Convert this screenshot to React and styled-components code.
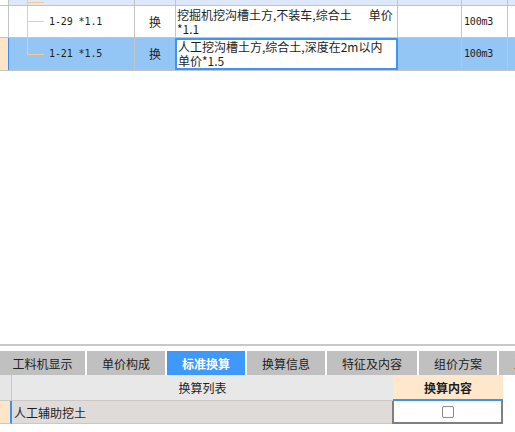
import React from "react";
import styled, { createGlobalStyle } from "styled-components";

const GlobalStyle = createGlobalStyle`
  html, body {
    margin: 0;
    padding: 0;
    background: #ffffff;
  }
  body {
    font-family: "Noto Sans CJK SC", "Noto Sans", sans-serif;
    font-size: 12px;
    color: #1e1e1e;
  }
`;

const rows = [
  {
    code: "1-29 *1.1",
    kind: "换",
    lines: ["挖掘机挖沟槽土方,不装车,综合土", "*1.1"],
    tail: "单价",
    unit: "100m3",
    selected: false,
  },
  {
    code: "1-21 *1.5",
    kind: "换",
    lines: ["人工挖沟槽土方,综合土,深度在2m以内", "单价*1.5"],
    unit: "100m3",
    selected: true,
  },
];

const tabs = [
  { label: "工料机显示", width: 85 },
  { label: "单价构成", width: 78 },
  { label: "标准换算", width: 78, active: true },
  { label: "换算信息", width: 78 },
  { label: "特征及内容", width: 90 },
  { label: "组价方案", width: 78 },
  { label: "工程量明细", width: 90 },
];

function DescLines({ row }) {
  return (
    <Desc>
      <div>
        {row.lines[0]}
        {row.tail && <Tail>{row.tail}</Tail>}
      </div>
      <div>{row.lines[1]}</div>
    </Desc>
  );
}

function App() {
  return (
    <>
      <GlobalStyle />
      <Page>
        <Grid>
          <GridRow $height={6} $bg="#dde8fa">
            <Cell $width={9} $bg="#ffffff" />
            <Cell $width={126}>
              <Guide />
            </Cell>
            <Cell $width={41} />
            <Cell $width={222} />
            <Cell $width={64} />
            <Cell $width={46} />
            <Filler />
          </GridRow>
          {rows.map((row) => (
            <GridRow
              key={row.code}
              $height={row.selected ? 33 : 32}
              $bg={row.selected ? "#93c6f5" : "#ffffff"}
            >
              <Marker $selected={row.selected} />
              <Cell $width={126}>
                <Guide $last={row.selected} />
                <Code>{row.code}</Code>
              </Cell>
              <Cell $width={41} $center>
                {row.kind}
              </Cell>
              {row.selected ? (
                <EditCell>
                  <DescLines row={row} />
                </EditCell>
              ) : (
                <Cell $width={222}>
                  <DescLines row={row} />
                </Cell>
              )}
              <Cell $width={64} />
              <Cell $width={46}>
                <Unit>{row.unit}</Unit>
              </Cell>
              <Filler />
            </GridRow>
          ))}
        </Grid>

        <Spacer />

        <Bottom>
          <Divider />
          <TabBar>
            {tabs.map((t) => (
              <Tab key={t.label} $width={t.width} $active={t.active}>
                {t.label}
              </Tab>
            ))}
          </TabBar>
          <SubHeader>
            <HeadCorner />
            <HeadTitle>换算列表</HeadTitle>
            <HeadActive>换算内容</HeadActive>
          </SubHeader>
          <SubRow>
            <RowMarker />
            <RowName>人工辅助挖土</RowName>
            <ValueCell>
              <Check />
            </ValueCell>
          </SubRow>
        </Bottom>
      </Page>
    </>
  );
}

export default App;

const Page = styled.div`
  width: 515px;
  height: 432px;
  display: flex;
  flex-direction: column;
  overflow: hidden;
  background: #ffffff;
`;

const Grid = styled.div`
  display: flex;
  flex-direction: column;
  flex: none;
`;

const GridRow = styled.div`
  display: flex;
  height: ${(p) => p.$height}px;
  background: ${(p) => p.$bg};
  border-bottom: 1px solid #c4c4c4;
  box-sizing: border-box;
  overflow: hidden;
`;

const Cell = styled.div`
  flex: none;
  width: ${(p) => p.$width}px;
  box-sizing: border-box;
  border-right: 1px solid #c4c4c4;
  display: flex;
  align-items: center;
  justify-content: ${(p) => (p.$center ? "center" : "flex-start")};
  background: ${(p) => p.$bg || "transparent"};
  line-height: 14px;
  overflow: hidden;
  white-space: nowrap;
`;

const Marker = styled.div`
  flex: none;
  width: 9px;
  box-sizing: border-box;
  background: ${(p) => (p.$selected ? "#fee5c6" : "#ffffff")};
  border-right: ${(p) =>
    p.$selected ? "1px solid #3d8ff0" : "1px solid #c4c4c4"};
`;

const EditCell = styled.div`
  flex: none;
  width: 223px;
  margin-left: -1px;
  box-sizing: border-box;
  border: 2px solid #3f94f4;
  background: #ffffff;
  display: flex;
  align-items: center;
  line-height: 14px;
  white-space: nowrap;
  overflow: hidden;
`;

const Filler = styled.div`
  flex: 1;
`;

const Guide = styled.span`
  flex: none;
  align-self: stretch;
  position: relative;
  width: 18px;
  margin-left: 18px;
  margin-bottom: -1px;

  &::before {
    content: "";
    position: absolute;
    left: 0;
    top: 0;
    width: 1px;
    height: ${(p) => (p.$last ? "50%" : "100%")};
    background: #f8ca8e;
  }

  &::after {
    content: "";
    position: absolute;
    left: 0;
    top: calc(50% - 1px);
    width: 17px;
    height: 1px;
    background: #f8ca8e;
  }
`;

const Code = styled.span`
  margin-left: 4px;
  font-family: "DejaVu Sans Mono", "Liberation Mono", monospace;
  font-size: 10px;
  letter-spacing: -0.1px;
`;

const Desc = styled.div`
  padding-left: 1px;
  font-size: 12px;
`;

const Tail = styled.span`
  margin-left: 17px;
`;

const Unit = styled.span`
  margin-left: 2px;
  font-family: "DejaVu Sans Mono", "Liberation Mono", monospace;
  font-size: 10px;
  letter-spacing: -0.2px;
`;

const Spacer = styled.div`
  flex: 1;
`;

const Bottom = styled.div`
  flex: none;
  display: flex;
  flex-direction: column;
  padding-bottom: 8px;
`;

const Divider = styled.div`
  height: 2px;
  background: #c8c8c8;
  margin-bottom: 5px;
`;

const TabBar = styled.div`
  display: flex;
  gap: 2px;
  height: 24px;
  overflow: hidden;
  background: #ffffff;
`;

const Tab = styled.div`
  flex: none;
  width: ${(p) => p.$width}px;
  display: flex;
  align-items: center;
  justify-content: center;
  background: ${(p) => (p.$active ? "#3f98fb" : "#c0c0c0")};
  color: ${(p) => (p.$active ? "#ffffff" : "#222222")};
  font-weight: ${(p) => (p.$active ? 700 : 400)};
  font-size: 12px;
  white-space: nowrap;
`;

const SubHeader = styled.div`
  display: flex;
  height: 26px;
  box-sizing: border-box;
`;

const HeadCorner = styled.div`
  flex: none;
  width: 12px;
  box-sizing: border-box;
  background: #e6e6e6;
  border-right: 1px solid #c8c8c8;
  border-bottom: 1px solid #c8c8c8;
`;

const HeadTitle = styled.div`
  flex: none;
  width: 381px;
  box-sizing: border-box;
  background: #e8e8e8;
  border-bottom: 1px solid #c8c8c8;
  display: flex;
  align-items: center;
  justify-content: center;
`;

const HeadActive = styled.div`
  flex: none;
  width: 110px;
  box-sizing: border-box;
  background: #fee7ca;
  border-bottom: 2px solid #3d93f5;
  display: flex;
  align-items: center;
  justify-content: center;
  font-weight: 700;
  padding-top: 1px;
`;

const SubRow = styled.div`
  display: flex;
  height: 23px;
`;

const RowMarker = styled.div`
  flex: none;
  width: 12px;
  box-sizing: border-box;
  background: #fee5c6;
  border-right: 2px solid #3d8ff0;
  border-bottom: 1px solid #c8c8c8;
`;

const RowName = styled.div`
  flex: none;
  width: 380px;
  box-sizing: border-box;
  background: #dfdbd8;
  border-bottom: 1px solid #c8c8c8;
  display: flex;
  align-items: center;
  padding-left: 2px;
`;

const ValueCell = styled.div`
  flex: none;
  width: 111px;
  box-sizing: border-box;
  background: #ffffff;
  border: 2px solid #808080;
  border-top: none;
  display: flex;
  align-items: center;
  justify-content: center;
`;

const Check = styled.span`
  width: 12px;
  height: 12px;
  box-sizing: border-box;
  border: 1px solid #8a8a8a;
  border-radius: 2px;
  background: #ffffff;
`;
